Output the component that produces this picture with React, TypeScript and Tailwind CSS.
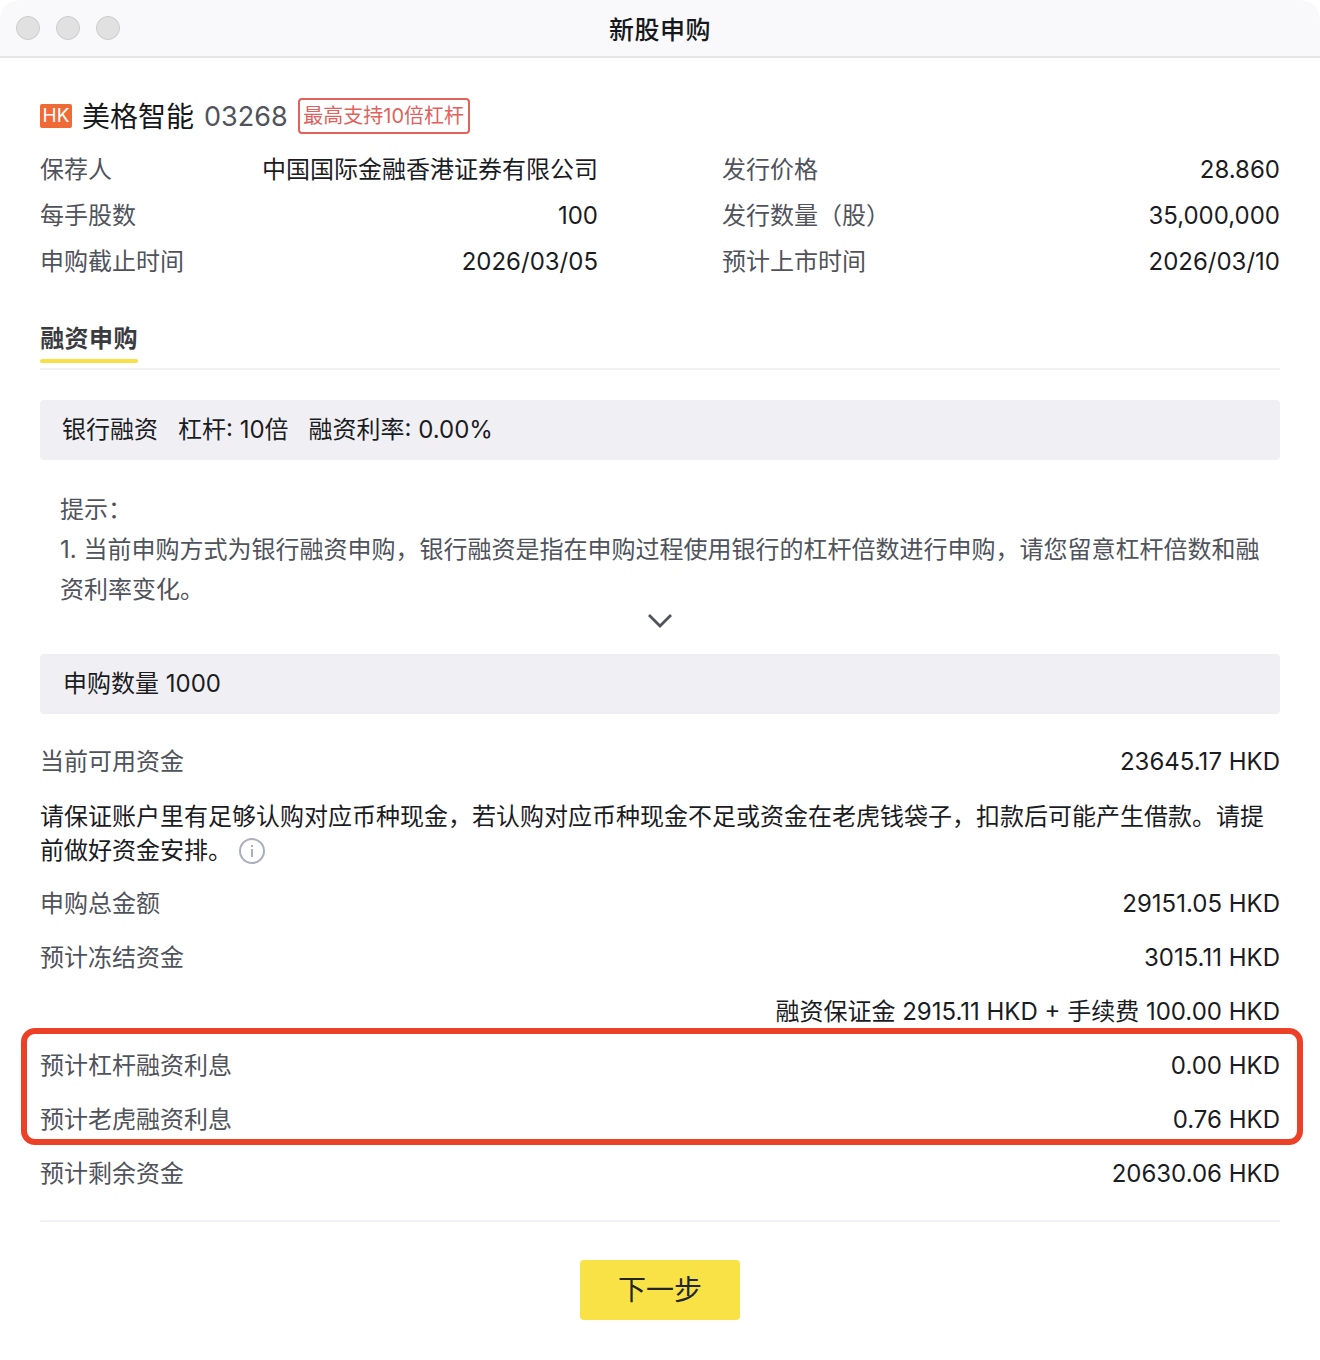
import React from "react";

function Info({ l, v }: { l: string; v: string }) {
  return (
    <div className="flex h-[46px] flex-1 items-center justify-between pt-[2px]">
      <span className="text-[#50535b]">{l}</span>
      <span className="text-[#1b1c1f]">{v}</span>
    </div>
  );
}

function Row({ l, v, cls = "h-[54px]" }: { l: string; v: string; cls?: string }) {
  return (
    <div className={`flex items-center justify-between ${cls}`}>
      <span className="text-[#50535b]">{l}</span>
      <span className="text-[#1b1c1f]">{v}</span>
    </div>
  );
}

function Dot() {
  return <div className="h-6 w-6 rounded-full border border-[#cdcdcd] bg-[#e1e1e1]" />;
}

export default function App() {
  return (
    <div className="relative h-[1360px] w-[1320px] overflow-hidden bg-white text-[24px] font-['Inter','Noto_Sans_CJK_SC',sans-serif]">
      <div className="relative flex h-[58px] items-center justify-center rounded-t-[20px] border-b-2 border-[#e6e6e8] bg-[#f9f9fb] pt-[5px]">
        <div className="absolute left-4 top-4 flex gap-4">
          <Dot />
          <Dot />
          <Dot />
        </div>
        <span className="text-[25px] font-medium tracking-[0.5px] text-[#17181a]">新股申购</span>
      </div>

      <div className="px-10">
        <div className="mt-10 flex h-9 items-center">
          <span className="flex h-6 w-8 items-center justify-center rounded-[2px] bg-[#f06a36] text-[19px] text-white">HK</span>
          <span className="ml-[10px] pt-[2px] text-[28px] text-[#17181a]">美格智能</span>
          <span className="ml-[10px] pt-[2px] text-[27px] text-[#50535b]">03268</span>
          <span className="ml-[10px] flex h-9 w-[172px] items-center justify-center rounded-[4px] border-2 border-[#e0625c] text-[20px] text-[#e0625c]">最高支持10倍杠杆</span>
        </div>

        <div className="mt-[12px] grid grid-cols-[558px_558px] justify-between">
          <Info l="保荐人" v="中国国际金融香港证券有限公司" />
          <Info l="发行价格" v="28.860" />
          <Info l="每手股数" v="100" />
          <Info l="发行数量（股）" v="35,000,000" />
          <Info l="申购截止时间" v="2026/03/05" />
          <Info l="预计上市时间" v="2026/03/10" />
        </div>

        <div className="mt-[29px] border-b-2 border-[#f1f1f4] pb-[5px]">
          <div className="flex h-[50px] w-[98px] flex-col justify-between">
            <div className="pt-[11px] text-center text-[24px] font-bold leading-[30px] tracking-[0.4px] text-[#3a3b40]">融资申购</div>
            <div className="h-1 rounded-full bg-[#f8e045]" />
          </div>
        </div>

        <div className="mt-[30px] flex h-[60px] items-center gap-[20px] rounded-[4px] bg-[#f0f0f4] px-[22px] text-[#1b1c1f]">
          <span>银行融资</span>
          <span>杠杆: 10倍</span>
          <span>融资利率: 0.00%</span>
        </div>

        <div className="mt-[30px] pl-5 pr-[16px] leading-10 text-[#50535b]">
          <p>提示：</p>
          <p>1. 当前申购方式为银行融资申购，银行融资是指在申购过程使用银行的杠杆倍数进行申购，请您留意杠杆倍数和融资利率变化。</p>
        </div>

        <div className="flex h-[44px] items-start justify-center pt-[2px]">
          <svg width="26" height="16" viewBox="0 0 26 16" fill="none">
            <path d="M2 3 L13 14 L24 3" stroke="#50535b" strokeWidth="2.8" />
          </svg>
        </div>

        <div className="flex h-[60px] items-center rounded-[4px] bg-[#f0f0f4] px-[23px] text-[#1b1c1f]">申购数量 1000</div>

        <div className="mt-[21px]">
          <Row l="当前可用资金" v="23645.17 HKD" />
        </div>
        <p className="mt-[11px] leading-[34px] text-[#1b1c1f]">
          请保证账户里有足够认购对应币种现金，若认购对应币种现金不足或资金在老虎钱袋子，扣款后可能产生借款。请提前做好资金安排。
          <svg className="ml-[7px] inline-block align-[-5px]" width="26" height="26" viewBox="0 0 26 26" fill="none">
            <circle cx="13" cy="13" r="12" stroke="#aab0bb" strokeWidth="2" />
            <rect x="12" y="11" width="2" height="8" fill="#aab0bb" />
            <rect x="12" y="7" width="2" height="2" fill="#aab0bb" />
          </svg>
        </p>
        <div className="mt-[9px]">
          <Row l="申购总金额" v="29151.05 HKD" />
          <Row l="预计冻结资金" v="3015.11 HKD" />
          <div className="flex h-[54px] items-center justify-end text-[#1b1c1f]">融资保证金 2915.11 HKD + 手续费 100.00 HKD</div>
          <Row l="预计杠杆融资利息" v="0.00 HKD" />
          <Row l="预计老虎融资利息" v="0.76 HKD" />
          <Row l="预计剩余资金" v="20630.06 HKD" />
        </div>

        <div className="mt-[19px] border-t-2 border-[#f1f1f6]" />
        <div className="mt-[38px] flex justify-center">
          <button className="h-[60px] w-40 rounded-[4px] bg-[#f9e246] text-[28px] text-[#24252a]">下一步</button>
        </div>
      </div>

      <div className="absolute left-[21px] top-[1028px] h-[117px] w-[1282px] rounded-[14px] border-[6px] border-[#ec4126]" />
    </div>
  );
}
